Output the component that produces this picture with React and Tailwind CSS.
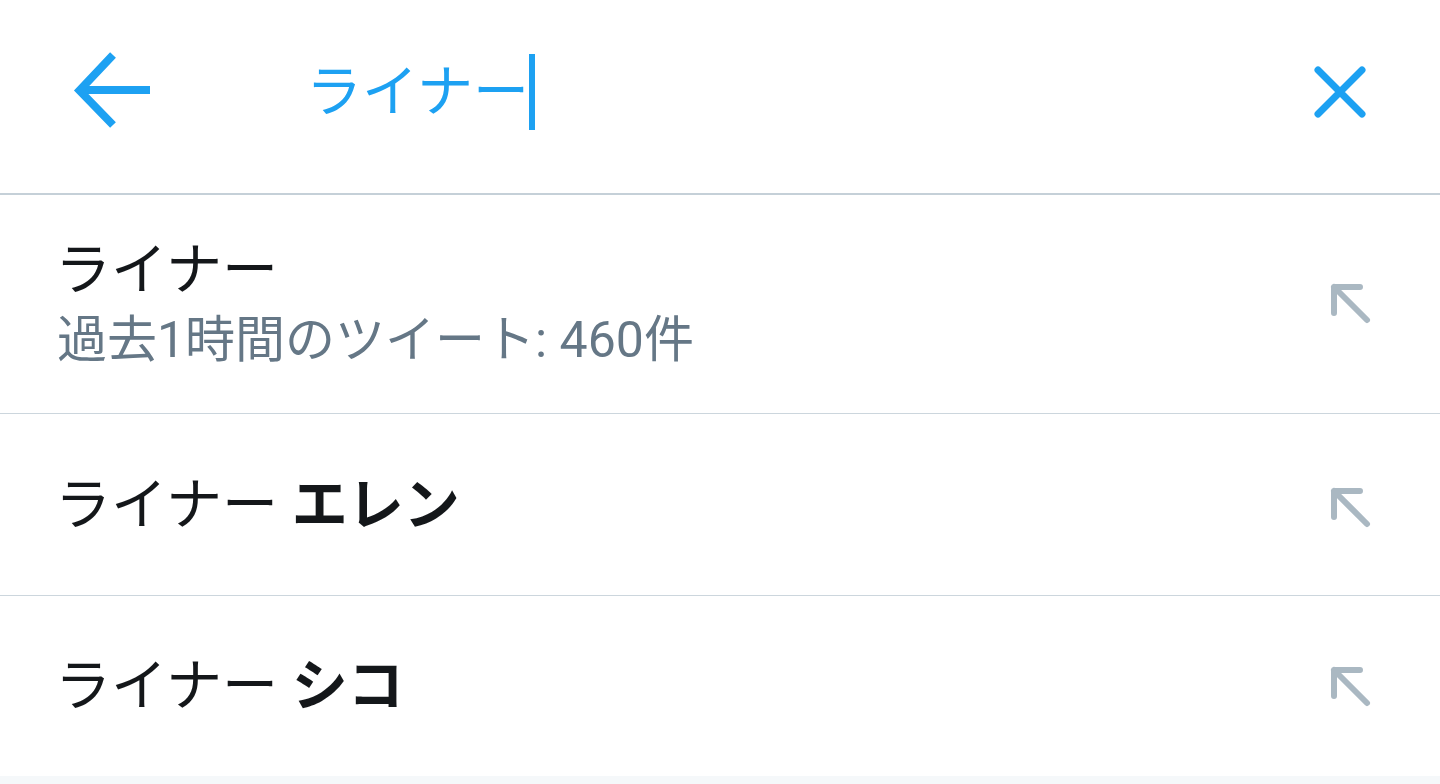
import React from 'react';

const font = { fontFamily: 'Roboto, "Noto Sans CJK JP", sans-serif' };

const BackArrow = () => (
  <svg width="80" height="80" viewBox="0 0 80 80" fill="none">
    <path d="M78 38H9" stroke="#1da1f2" strokeWidth="8" />
    <path d="M41 3L7.5 38.5L41 73" stroke="#1da1f2" strokeWidth="8" />
  </svg>
);

const CloseIcon = () => (
  <svg width="60" height="60" viewBox="0 0 60 60" fill="none">
    <path d="M8 8L52 52M52 8L8 52" stroke="#1da1f2" strokeWidth="7" strokeLinecap="round" />
  </svg>
);

const FillArrow = () => (
  <svg width="44" height="44" viewBox="0 0 44 44" fill="none">
    <path d="M5 31V5H31M5 5L38 38" stroke="#aab8c2" strokeWidth="6" strokeLinecap="round" strokeLinejoin="round" />
  </svg>
);

const suggestions = [
  { main: 'ライナー', sub: '過去1時間のツイート: 460件', h: 'h-[219px]', iconTop: 'mt-[0px]' },
  { main: 'ライナー', bold: 'エレン', h: 'h-[182px]', iconTop: 'mt-[6px]' },
  { main: 'ライナー', bold: 'シコ', h: 'h-[180px]', iconTop: 'mt-[2px]', last: true },
];

const App = () => {
  return (
    <div className="w-full h-[784px] flex flex-col bg-white" style={font}>
      {/* Search header */}
      <div className="h-[195px] flex items-center pl-[72px] pr-[70px] pb-[10px] border-b-2 border-[#c5d0d8] shrink-0">
        <BackArrow />
        <div className="ml-[154px] flex items-center flex-1">
          <span className="text-[56px] leading-none text-[#1da1f2]">ライナー</span>
          <span className="w-[6px] h-[76px] bg-[#1da1f2]" />
        </div>
        <CloseIcon />
      </div>

      {/* Suggestions */}
      {suggestions.map((s, i) => (
        <div
          key={i}
          className={`${s.h} flex items-center justify-between pl-[55px] pr-[67px] shrink-0 ${s.last ? '' : 'border-b border-[#ccd6dd]'}`}
        >
          <div className="flex flex-col">
            <p className="text-[56px] leading-[1.25] text-[#14171a]">
              {s.main}
              {s.bold && <span className="font-bold"> {s.bold}</span>}
            </p>
            {s.sub && (
              <p className="text-[50px] leading-[1.3] text-[#657786] mt-[3px] ml-[2px]">{s.sub}</p>
            )}
          </div>
          <div className={s.iconTop}>
            <FillArrow />
          </div>
        </div>
      ))}

      <div className="flex-1 bg-[#f5f8fa]" />
    </div>
  );
};

export default App;
